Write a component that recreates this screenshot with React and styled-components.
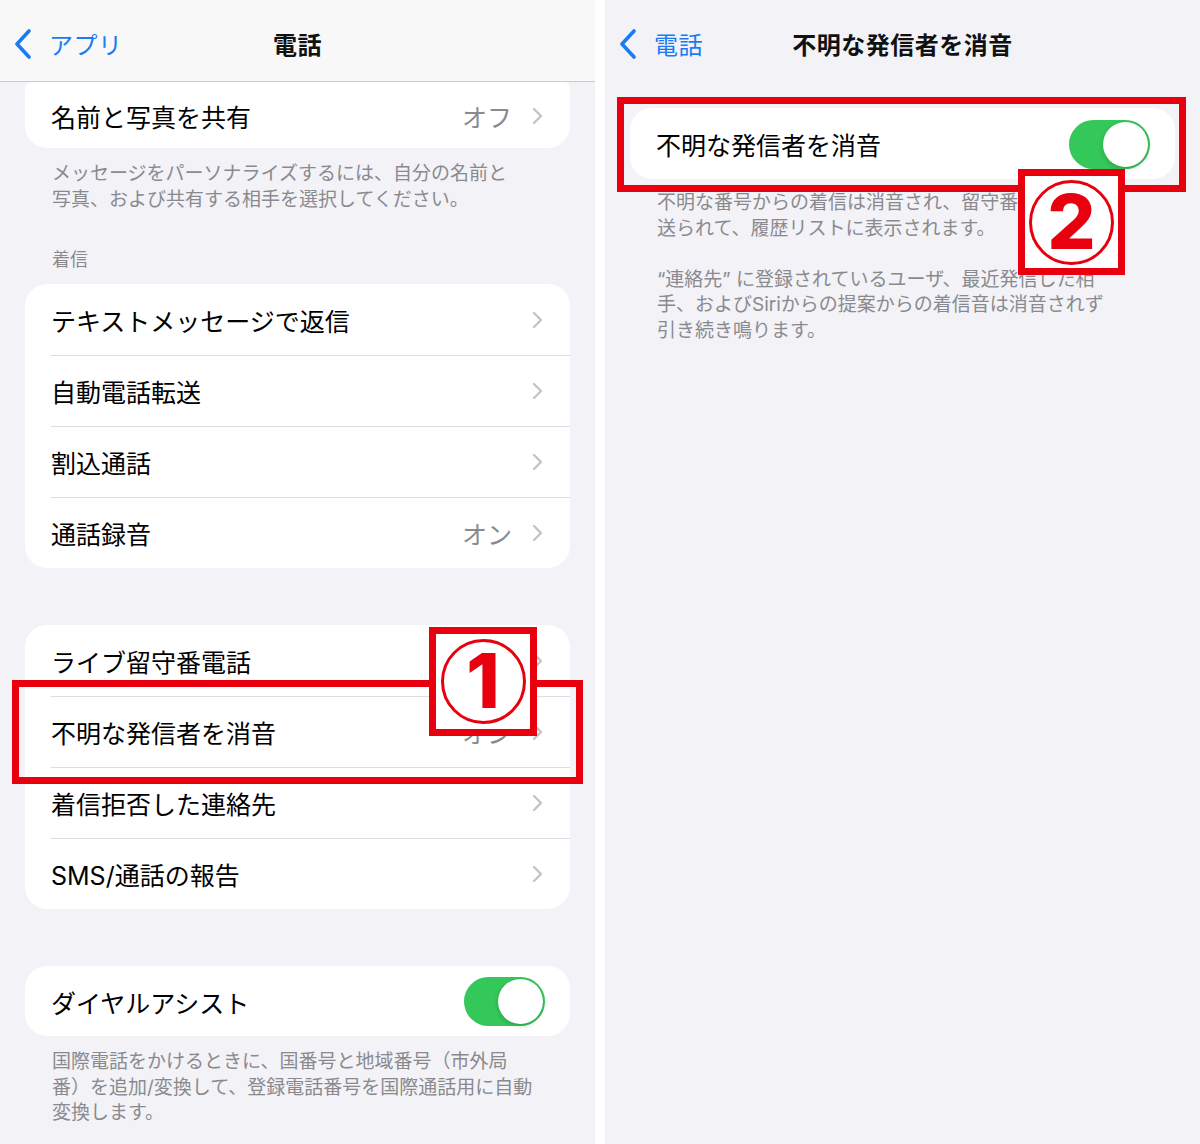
import React from "react";
import styled, { createGlobalStyle } from "styled-components";

const GlobalStyle = createGlobalStyle`
  html, body {
    margin: 0;
    padding: 0;
    background: #ffffff;
  }
  body {
    font-family: Inter, "Noto Sans CJK JP", sans-serif;
    -webkit-font-smoothing: antialiased;
  }
`;

const RED = "#e8000f";
const BLUE = "#1a7bf2";

const Page = styled.div`
  display: flex;
  gap: 10px;
  width: 1200px;
  height: 1144px;
  overflow: hidden;
  background: #ffffff;
`;

const Panel = styled.section`
  position: relative;
  width: 595px;
  height: 100%;
  background: #f2f2f7;
  display: flex;
  flex-direction: column;
  overflow: hidden;
`;

const NavBar = styled.header`
  height: 82px;
  flex-shrink: 0;
  display: grid;
  grid-template-columns: 1fr auto 1fr;
  align-items: center;
  padding: 6px 14px 0;
  box-sizing: border-box;
  background: ${ ( p ) => ( p.$solid ? "#f8f8f9" : "transparent" ) };
  border-bottom: 1px solid ${ ( p ) => ( p.$solid ? "#cdcdd1" : "transparent" ) };
`;

const Back = styled.div`
  display: flex;
  align-items: center;
  gap: 17px;
  color: ${ BLUE };
  font-size: 24px;
  letter-spacing: 0.5px;
`;

const Title = styled.h1`
  margin: 0;
  font-size: 24px;
  font-weight: 700;
  color: #111;
  letter-spacing: 0.5px;
`;

const Content = styled.div`
  padding: 0 25px;
  display: flex;
  flex-direction: column;
`;

const Card = styled.div`
  background: #ffffff;
  border-radius: ${ ( p ) => ( p.$clipped ? "6px 6px 22px 22px" : "22px" ) };
  margin-top: ${ ( p ) => p.$mt || 0 }px;
  overflow: hidden;
`;

const Row = styled.div`
  padding-left: 26px;
  display: flex;
`;

const RowInner = styled.div`
  flex: 1;
  height: ${ ( p ) => p.$h || 71 }px;
  display: flex;
  align-items: center;
  padding-right: ${ ( p ) => ( p.$toggle ? 25 : 27 ) }px;
  border-top: 1px solid ${ ( p ) => ( p.$first ? "transparent" : "#dedee2" ) };
  box-sizing: border-box;
`;

const Label = styled.span`
  flex: 1;
  font-size: 25px;
  color: #000;
  white-space: nowrap;
`;

const Value = styled.span`
  font-size: 25px;
  color: #8a8a8e;
  margin-right: 20px;
`;

const SectionHead = styled.div`
  margin: 36px 0 12px;
  padding-left: 27px;
  font-size: 18px;
  line-height: 24px;
  color: #8a8a8e;
`;

const Footer = styled.div`
  padding: ${ ( p ) => p.$pt || 13 }px 27px 0;
  font-size: 19px;
  line-height: 25.5px;
  color: #8a8a8e;
  white-space: nowrap;
`;

const Para = styled.p`
  margin: 0;
  & + & {
    margin-top: 25.5px;
  }
`;

const Toggle = styled.span`
  width: 81px;
  height: 49px;
  border-radius: 25px;
  background: #34c759;
  display: flex;
  justify-content: flex-end;
  align-items: center;
  padding: 0 2px;
  box-sizing: border-box;
`;

const Knob = styled.span`
  width: 45px;
  height: 45px;
  border-radius: 50%;
  background: #ffffff;
  box-shadow: 0 2px 5px rgba(0, 0, 0, 0.18);
`;

const Highlight = styled.div`
  position: absolute;
  left: ${ ( p ) => p.$x }px;
  top: ${ ( p ) => p.$y }px;
  width: ${ ( p ) => p.$w }px;
  height: ${ ( p ) => p.$h }px;
  border: 7px solid ${ RED };
  box-sizing: border-box;
  pointer-events: none;
`;

const Callout = styled.div`
  position: absolute;
  left: ${ ( p ) => p.$x }px;
  top: ${ ( p ) => p.$y }px;
  width: ${ ( p ) => p.$w }px;
  height: ${ ( p ) => p.$h }px;
  border: 7px solid ${ RED };
  background: #ffffff;
  box-sizing: border-box;
  display: grid;
  place-items: center;
`;

const Circled = styled.div`
  width: 85px;
  height: 85px;
  border: 3px solid ${ RED };
  border-radius: 50%;
  display: grid;
  place-items: center;
  color: ${ RED };
  font-family: Inter, "Noto Sans CJK JP", sans-serif;
  font-weight: 800;
  font-size: 76px;
  line-height: 1;
  padding-bottom: 4px;
  box-sizing: border-box;
`;

function BackChevron () {
  return (
    <svg width="18" height="30" viewBox="0 0 18 30">
      <path d="M15 2 L3 15 L15 28" fill="none" stroke={ BLUE } strokeWidth="3.6" strokeLinecap="round" strokeLinejoin="round" />
    </svg>
  );
}

function Chevron () {
  return (
    <svg width="11" height="18" viewBox="0 0 11 18">
      <path d="M2 2 L9 9 L2 16" fill="none" stroke="#c4c4c8" strokeWidth="2.4" strokeLinecap="round" strokeLinejoin="round" />
    </svg>
  );
}

function Item ( { label, value, first, h, toggle } ) {
  return (
    <Row>
      <RowInner $first={ first } $h={ h } $toggle={ toggle }>
        <Label>{ label }</Label>
        { value && <Value>{ value }</Value> }
        { toggle ? (
          <Toggle>
            <Knob />
          </Toggle>
        ) : (
          <Chevron />
        ) }
      </RowInner>
    </Row>
  );
}

function PhoneSettings () {
  return (
    <Panel>
      <NavBar $solid>
        <Back>
          <BackChevron />
          <span>アプリ</span>
        </Back>
        <Title>電話</Title>
        <div />
      </NavBar>
      <Content>
        <Card $clipped>
          <Item first h={ 66 } label="名前と写真を共有" value="オフ" />
        </Card>
        <Footer>
          メッセージをパーソナライズするには、自分の名前と
          <br />
          写真、および共有する相手を選択してください。
        </Footer>
        <SectionHead>着信</SectionHead>
        <Card>
          <Item first label="テキストメッセージで返信" />
          <Item label="自動電話転送" />
          <Item label="割込通話" />
          <Item label="通話録音" value="オン" />
        </Card>
        <Card $mt={ 57 }>
          <Item first label="ライブ留守番電話" />
          <Item label="不明な発信者を消音" value="オン" />
          <Item label="着信拒否した連絡先" />
          <Item label="SMS/通話の報告" />
        </Card>
        <Card $mt={ 57 }>
          <Item first h={ 70 } label="ダイヤルアシスト" toggle />
        </Card>
        <Footer>
          国際電話をかけるときに、国番号と地域番号（市外局
          <br />
          番）を追加/変換して、登録電話番号を国際通話用に自動
          <br />
          変換します。
        </Footer>
      </Content>
      <Highlight $x={ 12 } $y={ 680 } $w={ 571 } $h={ 104 } />
      <Callout $x={ 429 } $y={ 627 } $w={ 108 } $h={ 109 }>
        <Circled>1</Circled>
      </Callout>
    </Panel>
  );
}

function SilenceSettings () {
  return (
    <Panel>
      <NavBar>
        <Back>
          <BackChevron />
          <span>電話</span>
        </Back>
        <Title>不明な発信者を消音</Title>
        <div />
      </NavBar>
      <Content>
        <Card $mt={ 26 }>
          <Item first label="不明な発信者を消音" toggle />
        </Card>
        <Footer $pt={ 11 }>
          <Para>
            不明な番号からの着信は消音され、留守番電話に
            <br />
            送られて、履歴リストに表示されます。
          </Para>
          <Para>
            “連絡先” に登録されているユーザ、最近発信した相
            <br />
            手、およびSiriからの提案からの着信音は消音されず
            <br />
            引き続き鳴ります。
          </Para>
        </Footer>
      </Content>
      <Highlight $x={ 12 } $y={ 97 } $w={ 569 } $h={ 95 } />
      <Callout $x={ 413 } $y={ 169 } $w={ 107 } $h={ 106 }>
        <Circled>2</Circled>
      </Callout>
    </Panel>
  );
}

export default function App () {
  return (
    <>
      <GlobalStyle />
      <Page>
        <PhoneSettings />
        <SilenceSettings />
      </Page>
    </>
  );
}
